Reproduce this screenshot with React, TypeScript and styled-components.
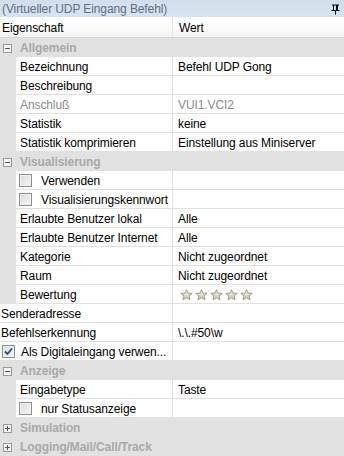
import React from 'react';
import styled, { createGlobalStyle } from 'styled-components';

const GlobalStyle = createGlobalStyle`
  html, body {
    margin: 0;
    padding: 0;
    background: #e1e1e1;
  }
  body {
    font-family: "Liberation Sans", Arial, sans-serif;
    font-size: 12px;
    letter-spacing: -0.1px;
    color: #000;
  }
`;

const Panel = styled.div`
  width: 344px;
  height: 456px;
  overflow: hidden;
  background: #e1e1e1;
  display: flex;
  flex-direction: column;
`;

const TitleBar = styled.div`
  height: 17px;
  flex: 0 0 17px;
  box-sizing: border-box;
  padding: 1px 4px 0 2px;
  display: flex;
  align-items: center;
  justify-content: space-between;
  background: linear-gradient(#d2deec, #d9e3ef);
  color: #5f6f85;
`;

const Header = styled.div`
  height: 20px;
  flex: 0 0 20px;
  display: flex;
  background: linear-gradient(#ffffff 0%, #fbfbfb 60%, #f1f1f1 100%);
  border-bottom: 1px solid #d5d5d5;
`;

const HeaderCell = styled.div<{ $w?: number }>`
  display: flex;
  align-items: center;
  padding-top: 1px;
  padding-left: ${p => (p.$w ? 2 : 6)}px;
  ${p => (p.$w ? `flex: 0 0 ${p.$w}px; border-right: 1px solid #e4e4e4; box-sizing: border-box;` : 'flex: 1;')}
`;

const Row = styled.div`
  height: 19px;
  flex: 0 0 19px;
  display: flex;
`;

const Gutter = styled.div<{ $w: number }>`
  flex: 0 0 ${p => p.$w}px;
  background: #e1e1e1;
`;

const NameCell = styled.div<{ $w: number; $pad: number; $gap: number; $muted?: boolean }>`
  flex: 0 0 ${p => p.$w}px;
  box-sizing: border-box;
  display: flex;
  align-items: center;
  gap: ${p => p.$gap}px;
  padding-top: 1px;
  padding-left: ${p => p.$pad}px;
  background: #fff;
  border-right: 1px solid #e1e1e1;
  border-bottom: 1px solid #e1e1e1;
  color: ${p => (p.$muted ? '#8c8c8c' : '#000')};
  white-space: nowrap;
  overflow: hidden;
`;

const ValueCell = styled.div<{ $muted?: boolean }>`
  flex: 1;
  display: flex;
  align-items: center;
  padding-top: 1px;
  padding-left: 5px;
  background: #fff;
  border-bottom: 1px solid #e1e1e1;
  color: ${p => (p.$muted ? '#8c8c8c' : '#000')};
  white-space: nowrap;
`;

const CategoryRow = styled(Row)`
  align-items: center;
  background: #e1e1e1;
  padding-top: 1px;
  box-sizing: border-box;
`;

const ExpandBox = styled.div`
  width: 9px;
  height: 9px;
  margin: 0 8px 0 3px;
  box-sizing: border-box;
  border: 1px solid #9a9a9a;
  background: #f4f4f4;
  position: relative;
  flex: 0 0 9px;
`;

const ExpandLine = styled.span<{ $vertical?: boolean }>`
  position: absolute;
  background: #555;
  ${p => (p.$vertical ? 'left: 3px; top: 1px; width: 1px; height: 5px;' : 'left: 1px; top: 3px; width: 5px; height: 1px;')}
`;

const CategoryLabel = styled.span`
  font-weight: bold;
  color: #a9a9a9;
`;

const Check = styled.span`
  width: 13px;
  height: 13px;
  flex: 0 0 13px;
  box-sizing: border-box;
  border: 1px solid #8e8f8f;
  background: linear-gradient(135deg, #dcdcdc, #f6f6f6);
  box-shadow: inset 0 0 0 1px #f0f0f0;
  display: flex;
  align-items: center;
  justify-content: center;
  margin-top: -1px;
`;

const Stars = styled.div`
  display: flex;
  gap: 2px;
  padding-left: 2px;
`;

const Category = ({ label, open }: { label: string; open?: boolean }) => (
  <CategoryRow>
    <ExpandBox>
      <ExpandLine />
      {!open && <ExpandLine $vertical />}
    </ExpandBox>
    <CategoryLabel>{label}</CategoryLabel>
  </CategoryRow>
);

type PropProps = {
  name: React.ReactNode;
  value?: React.ReactNode;
  indent?: boolean;
  muted?: boolean;
  check?: 'off' | 'on';
};

const Property = ({ name, value, indent = true, muted, check }: PropProps) => {
  const gutter = indent ? 16 : 0;
  return (
    <Row>
      {indent && <Gutter $w={gutter} />}
      <NameCell
        $w={173 - gutter}
        $pad={check ? (indent ? 3 : 2) : indent ? 4 : 1}
        $gap={indent ? 9 : 6}
        $muted={muted}
      >
        {check && (
          <Check>
            {check === 'on' && (
              <svg width="9" height="9" viewBox="0 0 9 9">
                <path d="M1 4.5 L3.5 7 L8 1.5" fill="none" stroke="#2a4a8a" strokeWidth="1.8" />
              </svg>
            )}
          </Check>
        )}
        <span>{name}</span>
      </NameCell>
      <ValueCell $muted={muted}>{value}</ValueCell>
    </Row>
  );
};

const Star = () => (
  <svg width="13" height="12" viewBox="0 0 13 12">
    <defs>
      <linearGradient id="sg" x1="0" y1="0" x2="0" y2="1">
        <stop offset="0" stopColor="#f2efe6" />
        <stop offset="1" stopColor="#cfc8b4" />
      </linearGradient>
    </defs>
    <path
      d="M6.5 0.6 L8 4.2 L12.2 4.4 L9 6.9 L10 10.9 L6.5 8.7 L3 10.9 L4 6.9 L0.8 4.4 L5 4.2 Z"
      fill="url(#sg)"
      stroke="#a39d8a"
      strokeWidth="1"
      strokeLinejoin="round"
    />
  </svg>
);

const Pin = () => (
  <svg width="9" height="11" viewBox="0 0 9 11">
    <path d="M1 1 H8 M2.5 1 V6 M6.5 1 V6 M5.5 1 V6 M0.5 6.5 H8.5 M4.5 6.5 V10.5" stroke="#000" strokeWidth="1" fill="none" />
  </svg>
);

export default function App() {
  return (
    <>
      <GlobalStyle />
      <Panel>
        <TitleBar>
          <span>(Virtueller UDP Eingang Befehl)</span>
          <Pin />
        </TitleBar>
        <Header>
          <HeaderCell $w={173}>Eigenschaft</HeaderCell>
          <HeaderCell>Wert</HeaderCell>
        </Header>
        <Category label="Allgemein" open />
        <Property name="Bezeichnung" value="Befehl UDP Gong" />
        <Property name="Beschreibung" />
        <Property name="Anschluß" value="VUI1.VCI2" muted />
        <Property name="Statistik" value="keine" />
        <Property name="Statistik komprimieren" value="Einstellung aus Miniserver" />
        <Category label="Visualisierung" open />
        <Property name="Verwenden" check="off" />
        <Property name="Visualisierungskennwort" check="off" />
        <Property name="Erlaubte Benutzer lokal" value="Alle" />
        <Property name="Erlaubte Benutzer Internet" value="Alle" />
        <Property name="Kategorie" value="Nicht zugeordnet" />
        <Property name="Raum" value="Nicht zugeordnet" />
        <Property
          name="Bewertung"
          value={
            <Stars>
              <Star />
              <Star />
              <Star />
              <Star />
              <Star />
            </Stars>
          }
        />
        <Property name="Senderadresse" indent={false} />
        <Property name="Befehlserkennung" value="\.\.#50\w" indent={false} />
        <Property name="Als Digitaleingang verwen..." indent={false} check="on" />
        <Category label="Anzeige" open />
        <Property name="Eingabetype" value="Taste" />
        <Property name="nur Statusanzeige" check="off" />
        <Category label="Simulation" />
        <Category label="Logging/Mail/Call/Track" />
      </Panel>
    </>
  );
}
